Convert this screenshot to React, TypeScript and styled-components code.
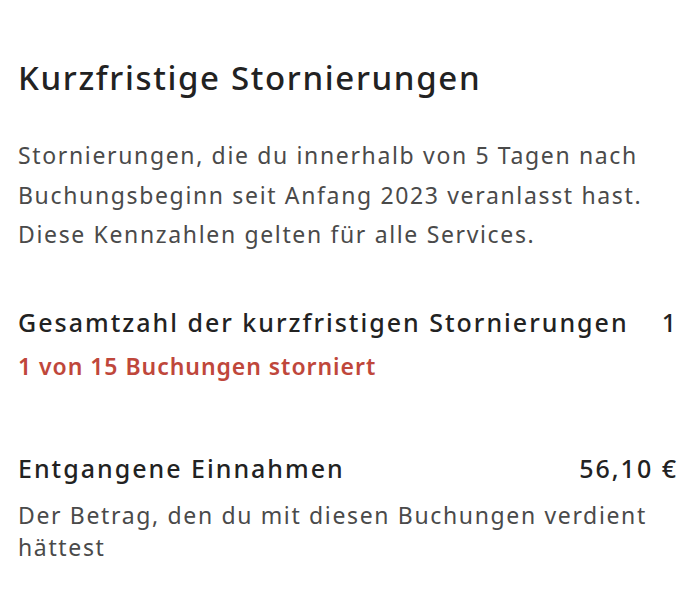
import React from "react";
import styled, { createGlobalStyle } from "styled-components";

const Global = createGlobalStyle`
  html, body { margin: 0; padding: 0; background: #ffffff; }
  body { font-family: "Noto Sans", "Open Sans", sans-serif; -webkit-font-smoothing: antialiased; }
`;

const Page = styled.main`
  width: 700px;
  min-height: 601px;
  box-sizing: border-box;
  padding: 56px 22px 0 18px;
  display: flex;
  flex-direction: column;
  color: #222222;
`;

const Title = styled.h1`
  margin: 0;
  font-size: 33px;
  line-height: 44px;
  font-weight: 500;
  letter-spacing: 1.65px;
  color: #222222;
`;

const Intro = styled.p`
  margin: 36px 0 0 0;
  font-size: 23px;
  line-height: 39.5px;
  letter-spacing: 1.65px;
  color: #4a4a4a;
`;

const Section = styled.section<{ $gap: number }>`
  margin-top: ${(p) => p.$gap}px;
  display: flex;
  flex-direction: column;
`;

const Row = styled.div`
  display: flex;
  justify-content: space-between;
  align-items: baseline;
  font-size: 25px;
  line-height: 34px;
  font-weight: 500;
  letter-spacing: 2px;
  color: #222222;
`;

const Note = styled.p<{ $tone: "alert" | "muted" }>`
  margin: ${(p) => (p.$tone === "alert" ? "11px" : "14px")} 0 0 0;
  font-size: 23px;
  line-height: 32px;
  font-weight: ${(p) => (p.$tone === "alert" ? 600 : 400)};
  letter-spacing: ${(p) => (p.$tone === "alert" ? "0.95px" : "1.65px")};
  color: ${(p) => (p.$tone === "alert" ? "#bf473b" : "#4a4a4a")};
`;

export default function App() {
  return (
    <>
      <Global />
      <Page>
        <Title>Kurzfristige Stornierungen</Title>
        <Intro>
          Stornierungen, die du innerhalb von 5 Tagen nach Buchungsbeginn seit Anfang 2023
          veranlasst hast. Diese Kennzahlen gelten für alle Services.
        </Intro>
        <Section $gap={50}>
          <Row>
            <span>Gesamtzahl der kurzfristigen Stornierungen</span>
            <span>1</span>
          </Row>
          <Note $tone="alert">1 von 15 Buchungen storniert</Note>
        </Section>
        <Section $gap={69}>
          <Row>
            <span>Entgangene Einnahmen</span>
            <span>56,10 €</span>
          </Row>
          <Note $tone="muted">Der Betrag, den du mit diesen Buchungen verdient hättest</Note>
        </Section>
      </Page>
    </>
  );
}
